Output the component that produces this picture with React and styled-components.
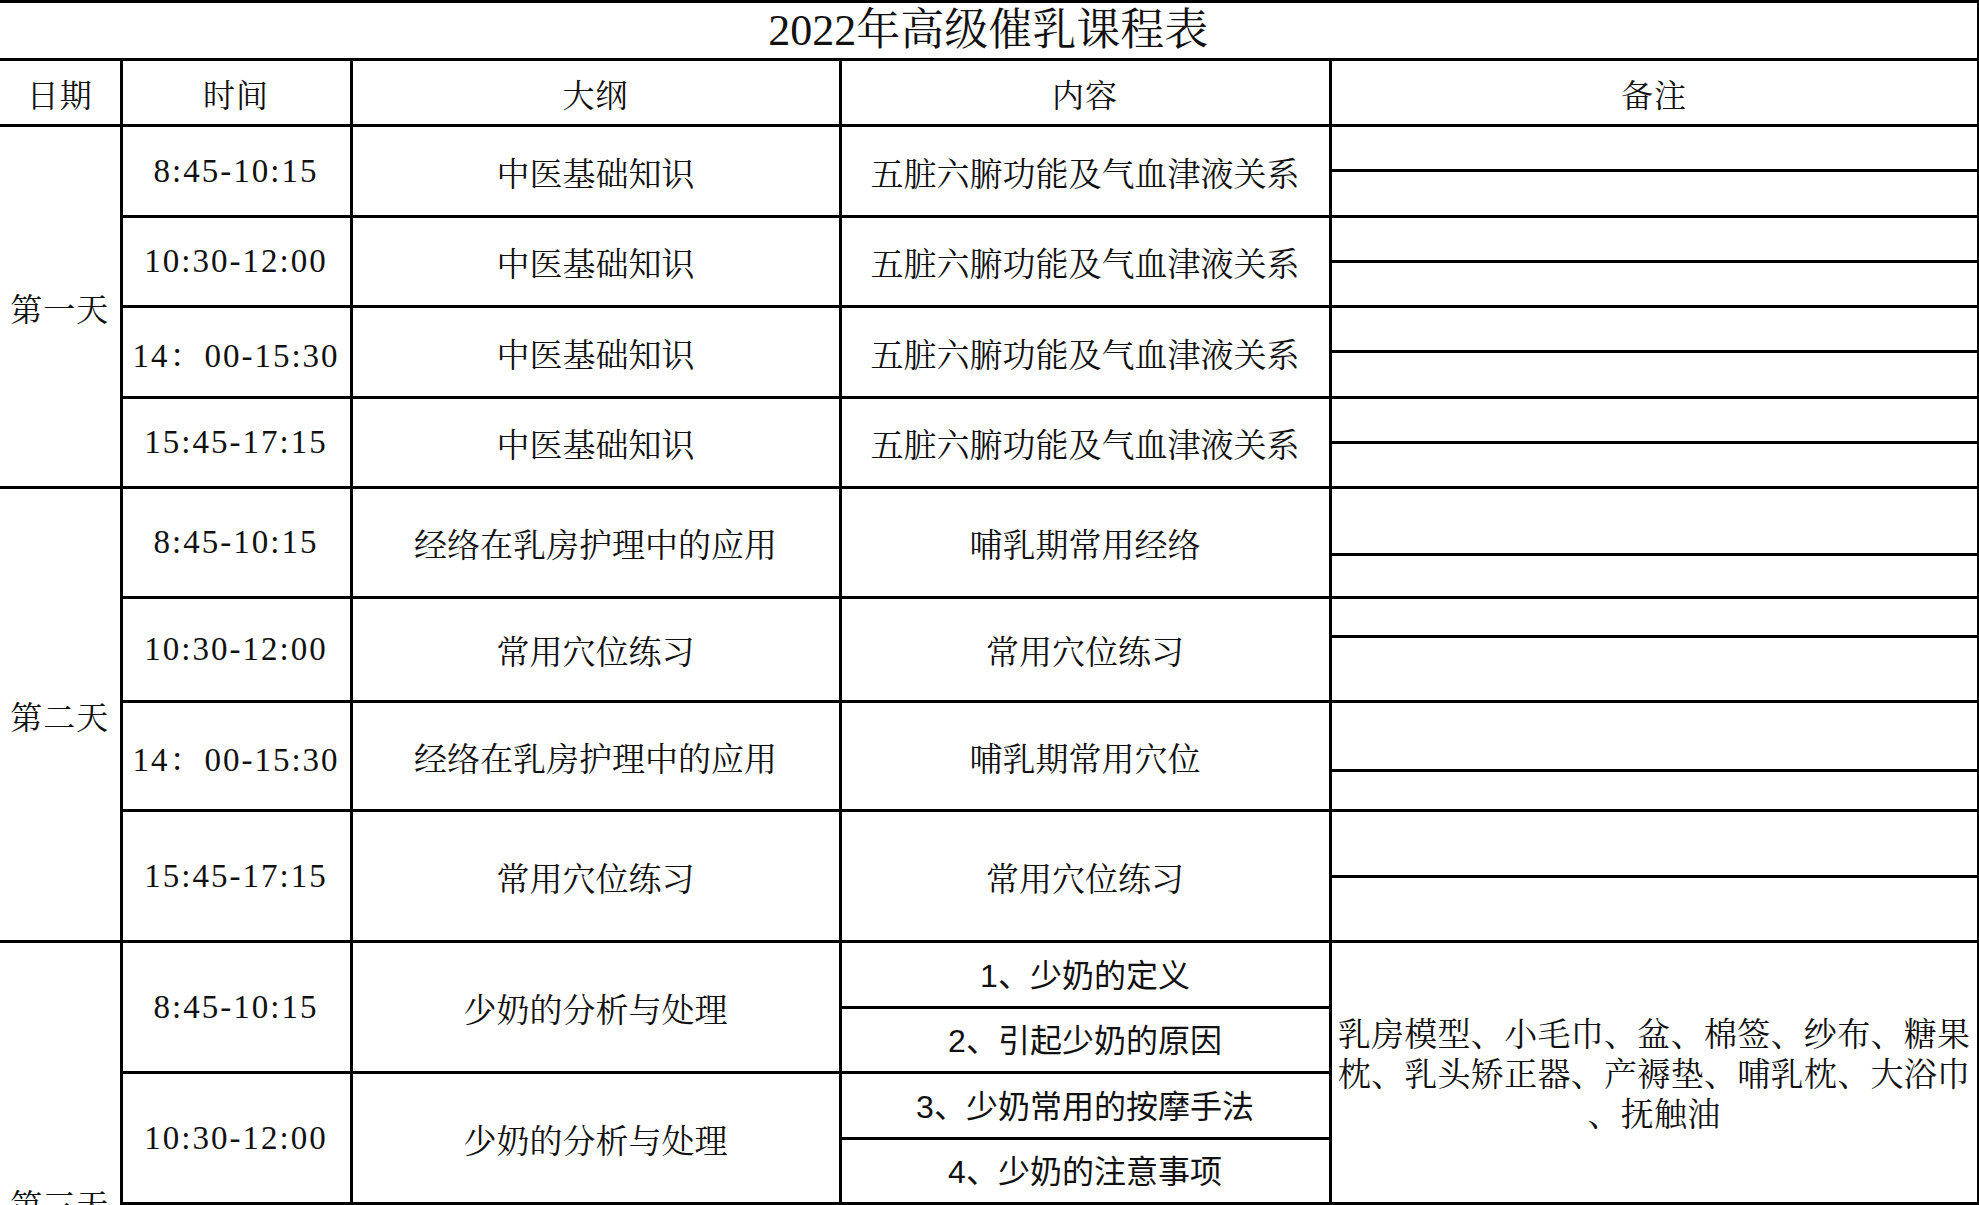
import React from 'react';
import styled, { createGlobalStyle } from 'styled-components';

const GlobalStyle = createGlobalStyle`
  html, body {
    margin: 0;
    padding: 0;
    background: #fff;
  }
  body {
    font-family: "Liberation Serif", "Noto Serif CJK SC", "Noto Sans CJK SC", serif;
    color: #111;
  }
`;

const Sheet = styled.table`
  border-collapse: collapse;
  table-layout: fixed;
  width: 1978px;
  border-left: 3px hidden;
  td {
    border: 3px solid #000;
    padding: 0;
    text-align: center;
    vertical-align: middle;
    white-space: nowrap;
    overflow: hidden;
  }
`;

const Row = styled.tr`
  height: ${(p) => p.$h}px;
`;

const TitleCell = styled.td`
  font-size: 44px;
  line-height: 1;
  border-top-width: 2px;
`;

const HeadCell = styled.td`
  font-size: 32px;
  letter-spacing: 1px;
`;

const DayCell = styled.td`
  font-size: 32px;
  letter-spacing: 1px;
`;

const TimeCell = styled.td`
  font-size: 33px;
  letter-spacing: 2px;
`;

const TextCell = styled.td`
  font-size: 33px;
`;

const PartCell = styled.td`
  font-family: "Liberation Sans", "Noto Sans CJK SC", sans-serif;
  font-size: 32px;
  padding-bottom: 4px !important;
`;

const NoteCell = styled.td``;

const NoteText = styled.div`
  font-size: 33px;
  line-height: 40px;
  letter-spacing: 0.3px;
  padding-top: 4px;
  span {
    display: block;
  }
`;

const days = [
  {
    label: '第一天',
    slots: [
      { time: '8:45-10:15', outline: '中医基础知识', content: '五脏六腑功能及气血津液关系', rows: [45, 46] },
      { time: '10:30-12:00', outline: '中医基础知识', content: '五脏六腑功能及气血津液关系', rows: [45, 45] },
      { time: '14：00-15:30', outline: '中医基础知识', content: '五脏六腑功能及气血津液关系', rows: [45, 46] },
      { time: '15:45-17:15', outline: '中医基础知识', content: '五脏六腑功能及气血津液关系', rows: [45, 45] },
    ],
  },
  {
    label: '第二天',
    slots: [
      { time: '8:45-10:15', outline: '经络在乳房护理中的应用', content: '哺乳期常用经络', rows: [67, 43] },
      { time: '10:30-12:00', outline: '常用穴位练习', content: '常用穴位练习', rows: [39, 65] },
      { time: '14：00-15:30', outline: '经络在乳房护理中的应用', content: '哺乳期常用穴位', rows: [69, 40] },
      { time: '15:45-17:15', outline: '常用穴位练习', content: '常用穴位练习', rows: [66, 65] },
    ],
  },
  {
    label: '第三天',
    note: {
      span: 4,
      lines: ['乳房模型、小毛巾、盆、棉签、纱布、糖果', '枕、乳头矫正器、产褥垫、哺乳枕、大浴巾', '、抚触油'],
    },
    slots: [
      { time: '8:45-10:15', outline: '少奶的分析与处理', parts: ['1、少奶的定义', '2、引起少奶的原因'], rows: [66, 65] },
      { time: '10:30-12:00', outline: '少奶的分析与处理', parts: ['3、少奶常用的按摩手法', '4、少奶的注意事项'], rows: [66, 65] },
      { time: '', outline: '', content: '', rows: [65, 65] },
      { time: '', outline: '', content: '', rows: [65, 65] },
    ],
  },
];

const renderDay = (day) => {
  const total = day.slots.reduce((n, s) => n + s.rows.length, 0);
  const out = [];
  let index = 0;
  day.slots.forEach((slot, si) => {
    slot.rows.forEach((h, ri) => {
      const first = index === 0;
      out.push(
        <Row key={`${day.label}-${si}-${ri}`} $h={h}>
          {first && <DayCell rowSpan={total}>{day.label}</DayCell>}
          {ri === 0 && <TimeCell rowSpan={slot.rows.length}>{slot.time}</TimeCell>}
          {ri === 0 && <TextCell rowSpan={slot.rows.length}>{slot.outline}</TextCell>}
          {slot.parts
            ? <PartCell>{slot.parts[ri]}</PartCell>
            : ri === 0 && <TextCell rowSpan={slot.rows.length}>{slot.content}</TextCell>}
          {day.note && first && (
            <NoteCell rowSpan={day.note.span}>
              <NoteText>
                {day.note.lines.map((l) => <span key={l}>{l}</span>)}
              </NoteText>
            </NoteCell>
          )}
          {(!day.note || index >= day.note.span) && <NoteCell />}
        </Row>
      );
      index += 1;
    });
  });
  return out;
};

export default function App() {
  return (
    <>
      <GlobalStyle />
      <Sheet>
        <colgroup>
          <col style={{ width: 121 }} />
          <col style={{ width: 230 }} />
          <col style={{ width: 489 }} />
          <col style={{ width: 490 }} />
          <col style={{ width: 648 }} />
        </colgroup>
        <tbody>
          <Row $h={58}>
            <TitleCell colSpan={5}>2022年高级催乳课程表</TitleCell>
          </Row>
          <Row $h={66}>
            <HeadCell>日期</HeadCell>
            <HeadCell>时间</HeadCell>
            <HeadCell>大纲</HeadCell>
            <HeadCell>内容</HeadCell>
            <HeadCell>备注</HeadCell>
          </Row>
          {days.map(renderDay)}
        </tbody>
      </Sheet>
    </>
  );
}
